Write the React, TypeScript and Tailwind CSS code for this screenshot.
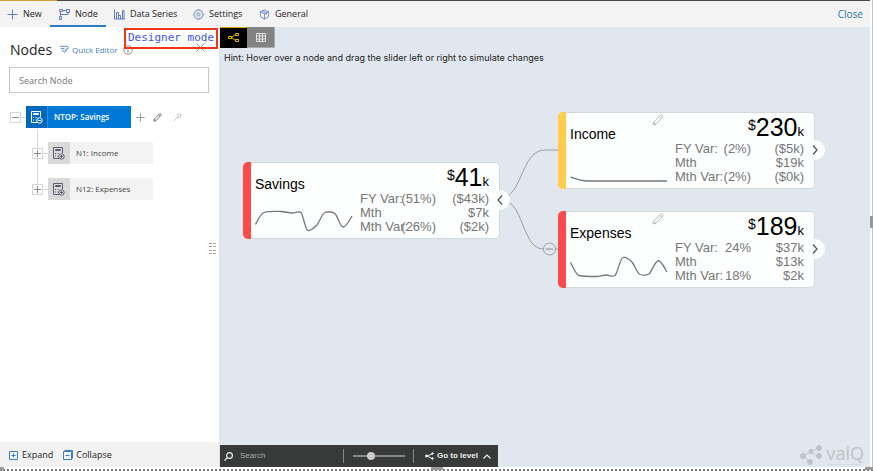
import React from "react";

type Metric = { label: string; pct?: string; value: string };

type NodeData = {
  title: string;
  amount: string;
  place: string;
  bar: string;
  spark: string;
  metrics: Metric[];
  direction: "left" | "right";
  editable?: boolean;
};

const nodes: NodeData[] = [
  {
    title: "Savings",
    amount: "41",
    place: "left-[23px] top-[135px]",
    bar: "bg-[#fd4b4b]",
    spark:
      "M0.5 17.5C3 13 5 7 9 5.5C14 4 22 4.5 26 4.5S33 6 37 6S43 3.5 46 5.5C49 10 50 23 53 23.5C56 24 59 21 62 18C65 14 67 6.5 70 5.5C73 4.5 77 4.5 80 6.5C83 10 85 20 88.5 20C91 20 94 14 97 9",
    metrics: [
      { label: "FY Var:", pct: "(51%)", value: "($43k)" },
      { label: "Mth", value: "$7k" },
      { label: "Mth Var:", pct: "(26%)", value: "($2k)" },
    ],
    direction: "left",
  },
  {
    title: "Income",
    amount: "230",
    place: "left-[338px] top-[85px]",
    bar: "bg-[#fecd4c]",
    spark: "M0.5 20C6 22 11 24 18 24H97",
    metrics: [
      { label: "FY Var:", pct: "(2%)", value: "($5k)" },
      { label: "Mth", value: "$19k" },
      { label: "Mth Var:", pct: "(2%)", value: "($0k)" },
    ],
    direction: "right",
    editable: true,
  },
  {
    title: "Expenses",
    amount: "189",
    place: "left-[338px] top-[184px]",
    bar: "bg-[#fd4b4b]",
    spark:
      "M0.5 6.5C3 11 6 19 9 19.5C14 20.5 21 20.5 26 20.5S33 19 36 19S42 21.5 45 19.5C48 16 50 2.5 53 1.5C56 0.5 59 3 62 6C65 10 67 17 70 18.5C73 19.5 76 19.5 79 18C82 15 85 5 88.5 4.5C91 4.5 94 11 97 16",
    metrics: [
      { label: "FY Var:", pct: "24%", value: "$37k" },
      { label: "Mth", value: "$13k" },
      { label: "Mth Var:", pct: "18%", value: "$2k" },
    ],
    direction: "right",
    editable: true,
  },
];

function Pencil({ className }: { className: string }) {
  return (
    <svg viewBox="0 0 12 12" className={className} fill="none" stroke="currentColor">
      <path d="M1 11l.8-3L8.8 1q1-.6 1.7.2t.2 1.7L4 10.2zM1.8 8L4 10.2M7.6 2.2l2.2 2.2" />
    </svg>
  );
}

function PlusIcon({ className }: { className: string }) {
  return (
    <svg viewBox="0 0 11 11" className={className} fill="none" stroke="currentColor">
      <path d="M5.5 .5v10M.5 5.5h10" />
    </svg>
  );
}

function TreeIcon({ className }: { className: string }) {
  return (
    <svg viewBox="0 0 11 11" className={className} fill="none" stroke="currentColor">
      <path d="M.5 .5h3v2h-3zM7.5 .5h3v3h-3zM.5 7.5h2v3h-2zM3.500 1.500h4M1.500 2.500v5M9 3.500v2H1.500" />
    </svg>
  );
}

function ChartIcon({ className }: { className: string }) {
  return (
    <svg viewBox="0 0 11 11" className={className} fill="none" stroke="currentColor">
      <path d="M.5 .5v9.500H11M2.500 10V3.500h2V10M4.500 6.500h2V10M8.500 10V1.500h1.500V10" />
    </svg>
  );
}

function GearIcon({ className }: { className: string }) {
  return (
    <svg viewBox="0 0 12 12" className={className} fill="none" stroke="currentColor" strokeWidth=".9">
      <path d="M5 .8h2l.4 1.400 1.300-.6L10.300 3l-.6 1.300L11.200 5v2l-1.500.6.6 1.400-1.500 1.400-1.400-.6L7 11.200H5l-.5-1.400-1.400.6L1.700 9l.6-1.400L.8 7V5l1.500-.6L1.700 3l1.500-1.400 1.300.6z" />
      <circle cx="6" cy="6" r="1.800" />
    </svg>
  );
}

function CubeIcon({ className }: { className: string }) {
  return (
    <svg viewBox="0 0 12 12" className={className} fill="none" stroke="currentColor" strokeWidth=".9">
      <path d="M6 1l4.500 2v5.500L6 11 1.500 8.500V3zM1.500 3L6 5.200 10.500 3M6 5.200V11M3.700 2l4.500 2.200v2" />
    </svg>
  );
}

function Branches({ className }: { className: string }) {
  return (
    <svg viewBox="0 0 11 9" className={className} fill="none" stroke="currentColor">
      <path d="M.5 3.500h3v2h-3zM7.500 .5h3v2h-3zM7.500 6.500h3v2h-3zM3.500 4.500l4-3M3.500 4.500l4 3" />
    </svg>
  );
}

function CalcIcon({ minus }: { minus?: boolean }) {
  return (
    <svg viewBox="0 0 12 13" className="h-[13px] w-[12px]" fill="none" stroke="currentColor">
      <path d="M9.500 6V.5h-9v11H6M2.500 2.500h5v1h-5z" />
      <path d="M2 6.500h1M4.500 6.500h1M2 9h1M4.500 9h1" />
      <circle cx="8.500" cy="9.500" r="2.700" />
      <path d={minus ? "M7 9.500h3" : "M7 9.500h3M8.500 8v3"} />
    </svg>
  );
}

const tabs = [
  { name: "New", Icon: PlusIcon, box: "w-[50px] pl-[7px]" },
  { name: "Node", Icon: TreeIcon, box: "w-[56px] pl-[9px] border-[#2b7cc7]" },
  { name: "Data Series", Icon: ChartIcon, box: "w-[78px] pl-[8px]" },
  { name: "Settings", Icon: GearIcon, box: "w-[68px] pl-[9px]" },
  { name: "General", Icon: CubeIcon, box: "w-[60px] pl-[7px]" },
];

function Toggle({ open, label }: { open?: boolean; label: string }) {
  return (
    <button
      aria-label={label}
      className="relative z-10 flex h-[11px] w-[11px] shrink-0 items-center justify-center border border-[#d6d6d6] bg-white text-[#8a8a8a]"
    >
      <svg viewBox="0 0 7 7" className="h-[7px] w-[7px]" fill="none" stroke="currentColor">
        <path d={open ? "M0 3.500h7" : "M0 3.500h7M3.500 0v7"} />
      </svg>
    </button>
  );
}

function TreeChild({ name }: { name: string }) {
  return (
    <li className="flex h-[22px] items-center pl-[32px]">
      <Toggle label={"Expand " + name} />
      <span className="h-px w-[5px] bg-[#d6d6d6]" />
      <button className="flex h-[22px] w-[105px] items-center bg-[#f3f3f3] text-[8px] text-[#444]">
        <span className="flex h-full w-[22px] items-center justify-center bg-[#d9d9d9] text-[#5d5d70]">
          <CalcIcon />
        </span>
        <span className="pl-[6px]">{name}</span>
      </button>
    </li>
  );
}

function NodeCard({ node }: { node: NodeData }) {
  return (
    <article
      className={
        "absolute flex h-[77px] w-[257px] rounded-[5px] border border-[#d3d8dc] bg-[#fdfefe] " + node.place
      }
    >
      <div className={"-my-px -ml-px w-[8px] rounded-l-[5px] " + node.bar} />
      <div className="ml-[4px] w-[98px] pt-[13px]">
        <h2 className="text-[14px] leading-[16px] text-black">{node.title}</h2>
        <svg viewBox="0 0 98 26" className="mt-[15px] h-[26px] w-[98px]" fill="none" stroke="#777" strokeWidth="1.300">
          <path d={node.spark} />
        </svg>
      </div>
      <div className="ml-[7px] w-[129px]">
        <div className="flex h-[29px] items-baseline justify-end leading-[29px] text-black">
          <span className="self-start text-[14px] leading-[24px]">$</span>
          <span className="text-[25px]">{node.amount}</span>
          <span className="text-[13px]">k</span>
        </div>
        <dl className="text-[13px] leading-[14px] text-[#777]">
          {node.metrics.map((m) => (
            <div key={m.label} className="flex whitespace-nowrap">
              <dt className="w-[30px]">{m.label}</dt>
              <dd className="w-[46px] text-right">{m.pct}</dd>
              <dd className="flex-1 text-right">{m.value}</dd>
            </div>
          ))}
        </dl>
      </div>
      {node.editable && (
        <button aria-label={"Edit " + node.title} className="absolute left-[93px] top-[1px] text-[#bbb]">
          <Pencil className="h-[12px] w-[12px]" />
        </button>
      )}
      <button
        aria-label={"Toggle " + node.title}
        className={
          "absolute top-[27px] flex h-[20px] w-[20px] items-center justify-center rounded-full bg-[#fdfefe] text-[#555] " +
          (node.direction === "left" ? "-right-[11px] pr-[1px]" : "-right-[11px]")
        }
      >
        <svg viewBox="0 0 6 10" className="h-[10px] w-[6px]" fill="none" stroke="currentColor" strokeWidth="1.300">
          <path d={node.direction === "left" ? "M5 .5L1 5l4 4.500" : "M1 .5L5 5 1 9.500"} />
        </svg>
      </button>
    </article>
  );
}

function Sidebar() {
  return (
    <aside className="flex w-[220px] shrink-0 flex-col border-r border-[#e3e3e3] bg-white">
      <div className="relative flex h-[40px] items-center pl-[10px] pt-[5px]">
        <h1 className="w-[50px] text-[14px] text-[#222]">Nodes</h1>
        <button className="flex items-center gap-[3px] text-[8px] text-[#4a7ebd]">
          <svg viewBox="0 0 10 10" className="h-[9px] w-[9px]" fill="none" stroke="currentColor">
            <path d="M0 1.500h8M1 4h4M2 6.500h3M8 1.500L9.500 3 5.500 6M6 7l2-2M4.500 9l2-2" />
          </svg>
          Quick Editor
        </button>
        <button aria-label="Information" className="ml-[5px] text-[#777]">
          <svg viewBox="0 0 10 10" className="h-[10px] w-[10px]" fill="none" stroke="currentColor" strokeWidth=".8">
            <circle cx="5" cy="5" r="4.300" />
            <path d="M5 4.500V8M5 2.500v1" />
          </svg>
        </button>
        <button aria-label="Close panel" className="absolute left-[196px] top-[16px] text-[#777]">
          <svg viewBox="0 0 9 9" className="h-[9px] w-[9px]" fill="none" stroke="currentColor" strokeWidth=".8">
            <path d="M.5.5l8 8M8.500.5l-8 8" />
          </svg>
        </button>
        <div className="absolute left-[124px] top-px flex h-[21px] items-center border-2 border-[#f03519] px-[2px] font-['DejaVu_Sans_Mono',monospace] text-[11px] text-[#4054ee]">
          Designer mode
        </div>
      </div>
      <input
        aria-label="Search Node"
        placeholder="Search Node"
        className="ml-[9px] mr-[10px] h-[26px] border border-[#c6c6c6] px-[9px] text-[9px] text-[#333] outline-none placeholder:text-[#777]"
      />
      <ul className="relative mt-[13px] flex flex-1 flex-col gap-[14px]">
        <span className="absolute left-[37px] top-[23px] h-[60px] w-px bg-[#d6d6d6]" />
        <li className="flex h-[22px] items-center pl-[10px]">
          <Toggle open label="Collapse NTOP: Savings" />
          <span className="h-px w-[5px] bg-[#d6d6d6]" />
          <button className="flex h-[22px] w-[105px] items-center bg-[#0078d7] text-[8px] font-semibold text-white">
            <span className="flex h-full w-[22px] items-center justify-center border-r border-[#2a8cdb] bg-[#0068bc]">
              <CalcIcon minus />
            </span>
            <span className="pl-[6px]">NTOP: Savings</span>
          </button>
          <button aria-label="Add node" className="ml-[5px] text-[#888]">
            <PlusIcon className="h-[9px] w-[9px]" />
          </button>
          <button aria-label="Edit node" className="ml-[8px] text-[#555]">
            <Pencil className="h-[9px] w-[9px]" />
          </button>
          <button aria-label="Format node" className="ml-[11px] text-[#bbb]">
            <svg viewBox="0 0 10 10" className="h-[9px] w-[9px]" fill="none" stroke="currentColor">
              <path d="M1 9l4.500-4.500M4 2.500l3.500 3.500M5 1.500h3.500V5M5 3l2 2" />
            </svg>
          </button>
        </li>
        <TreeChild name="N1: Income" />
        <TreeChild name="N12: Expenses" />
        <li className="absolute right-[3px] top-[137px] text-[#aaa39f]" aria-hidden="true">
          <svg viewBox="0 0 7 12" className="h-[12px] w-[7px]" fill="none" stroke="currentColor" strokeDasharray="3 1">
            <path d="M0 .5h7M0 3.500h7M0 7.500h7M0 10.500h7" />
          </svg>
        </li>
      </ul>
      <footer className="flex h-[25px] shrink-0 items-center gap-[10px] bg-[#f2f2f2] pl-[9px] pt-[1px] text-[9px] text-[#222]">
        <button className="flex items-center gap-[4px]">
          <svg viewBox="0 0 9 9" className="h-[9px] w-[9px]" fill="none" stroke="#3b7fc4">
            <path d="M.5.5h8v8h-8zM2.500 4.500h4M4.500 2.500v4" />
          </svg>
          Expand
        </button>
        <button className="flex items-center gap-[3px]">
          <svg viewBox="0 0 10 10" className="h-[10px] w-[10px]" fill="none" stroke="#3b7fc4">
            <path d="M.5 1.500h8v8h-8zM2.500 5.500h4M1.500.5h8v8" />
          </svg>
          Collapse
        </button>
      </footer>
    </aside>
  );
}

function Canvas() {
  return (
    <main className="relative flex min-w-0 flex-1 flex-col bg-[#e1e7ef] font-['Liberation_Sans',Arial,sans-serif]">
      <div className="flex h-[21px]">
        <button aria-label="Tree view" className="flex w-[27px] items-center justify-center border-t border-[#d9a900] bg-black pb-[1px] text-[#e6b800]">
          <Branches className="h-[9px] w-[11px]" />
        </button>
        <button aria-label="Grid view" className="flex w-[28px] items-center justify-center border-b border-r border-[#a9a9a9] bg-[#828282] text-[#f4f7fa]">
          <svg viewBox="0 0 10 9" className="h-[9px] w-[10px]" fill="none" stroke="currentColor" strokeWidth=".8">
            <path d="M.5.5h9v8h-9zM.5 3h9M.5 6h9M3.500.5v8M6.500 .5v8" />
          </svg>
        </button>
      </div>
      <p className="pl-[4px] pt-[3px] font-[Inter,sans-serif] text-[9px] leading-[14px] text-[#222]">
        Hint: Hover over a node and drag the slider left or right to simulate changes
      </p>
      <svg viewBox="0 0 380 300" className="absolute left-0 top-0 h-[300px] w-[380px]" fill="none" stroke="#9a9ea4">
        <path d="M288 169C303 158 304 123 325 123H338" />
        <path d="M288 175C303 181 304 222 323 222M336 222h3" />
        <circle cx="329.500" cy="222" r="6" />
        <path d="M326 222h7" strokeWidth="1.300" />
      </svg>
      {nodes.map((n) => (
        <NodeCard key={n.title} node={n} />
      ))}
      <div className="mt-auto flex items-end justify-between">
        <div className="flex h-[22px] w-[278px] items-center bg-[#373a39] text-[8px] text-[#eee]">
          <svg viewBox="0 0 9 9" className="ml-[4px] h-[9px] w-[9px]" fill="none" stroke="currentColor" strokeWidth="1.200">
            <circle cx="5.500" cy="3.500" r="2.900" />
            <path d="M3.500 5.500L.5 8.500" />
          </svg>
          <input
            aria-label="Search"
            placeholder="Search"
            className="ml-[7px] w-[103px] bg-transparent text-[8px] outline-none placeholder:text-[#aaa]"
          />
          <span className="h-[14px] w-px bg-[#888]" />
          <input
            type="range"
            aria-label="Zoom"
            min={0}
            max={100}
            defaultValue={32}
            className="ml-[9px] h-[10px] w-[52px] appearance-none bg-transparent [&::-webkit-slider-runnable-track]:h-[2px] [&::-webkit-slider-runnable-track]:bg-[#888] [&::-webkit-slider-thumb]:-mt-[3px] [&::-webkit-slider-thumb]:h-[8px] [&::-webkit-slider-thumb]:w-[8px] [&::-webkit-slider-thumb]:appearance-none [&::-webkit-slider-thumb]:rounded-full [&::-webkit-slider-thumb]:bg-[#ccc]"
          />
          <span className="ml-[8px] h-[14px] w-px bg-[#888]" />
          <button className="ml-[11px] flex flex-1 items-center font-bold">
            <svg viewBox="0 0 9 8" className="h-[8px] w-[9px]" fill="currentColor" stroke="currentColor">
              <path d="M2 4l5-2M2 4l5 2.500" />
              <circle cx="1.500" cy="4" r="1" />
              <circle cx="7.500" cy="1.500" r=".8" />
              <circle cx="7.500" cy="6.500" r=".8" />
            </svg>
            <span className="ml-[3px]">Go to level</span>
            <svg viewBox="0 0 8 5" className="ml-auto mr-[7px] h-[5px] w-[8px]" fill="none" stroke="currentColor" strokeWidth="1.200">
              <path d="M.5 4.500L4 1l3.500 3.500" />
            </svg>
          </button>
        </div>
        <div className="mr-[6px] flex items-start gap-[3px] pb-[1px] text-[#bfc3c7]">
          <svg viewBox="0 0 24 22" className="h-[22px] w-[24px]" fill="currentColor" stroke="currentColor">
            <path d="M4 12l7-4 9-4M11 8l9 4M4 12l7 6" strokeWidth=".8" />
            <circle cx="4" cy="12" r="2.500" />
            <circle cx="12" cy="7.500" r="2" />
            <circle cx="20" cy="4" r="2.500" />
            <circle cx="20" cy="12" r="2.500" />
            <circle cx="11" cy="18" r="2.500" />
          </svg>
          <div className="flex flex-col">
            <span className="font-['Open_Sans',sans-serif] text-[18px] font-medium leading-[18px]">valQ</span>
            <span className="text-[2px] leading-[4px]">AGILE PLANNING &amp; SIMULATIONS</span>
          </div>
        </div>
      </div>
    </main>
  );
}

export default function App() {
  return (
    <div className="flex h-screen flex-col overflow-hidden bg-white font-['Open_Sans','Noto_Sans',sans-serif]">
      <div className="relative flex min-h-0 flex-1 flex-col border-r border-[#c4c4c4] pr-[2px]">
        <div className="flex h-px shrink-0 bg-[#4b4749]">
          <span className="w-[57px] bg-[#cf9f2e]" />
        </div>
        <header className="flex h-[26px] shrink-0 items-stretch bg-[#f3f3f3] text-[9px] text-[#222]">
          {tabs.map(({ name, Icon, box }) => (
            <button
              key={name}
              className={"flex items-center gap-[5px] whitespace-nowrap border-b-2 pt-[2px] " + box + (name === "Node" ? "" : " border-transparent")}
            >
              <Icon className="h-[11px] w-[11px] shrink-0 text-[#6679bd]" />
              {name}
            </button>
          ))}
          <button className="ml-auto mr-[7px] text-[10px] text-[#2674a8]">Close</button>
        </header>
        <div className="flex min-h-0 flex-1">
          <Sidebar />
          <Canvas />
        </div>
        <span className="absolute -right-px top-[216px] h-[12px] w-[3px] bg-[#999]" />
      </div>
      <div className="relative h-[4px] shrink-0">
        <div className="mt-[2px] border-b-2 border-dotted border-[#777]" />
        <span className="absolute left-0 top-0 h-[3px] w-[4px] bg-[#999]" />
        <span className="absolute left-1/2 top-0 h-[3px] w-[12px] -translate-x-1/2 bg-[#999]" />
        <span className="absolute right-0 top-0 h-[3px] w-[8px] bg-[#999]" />
      </div>
    </div>
  );
}
